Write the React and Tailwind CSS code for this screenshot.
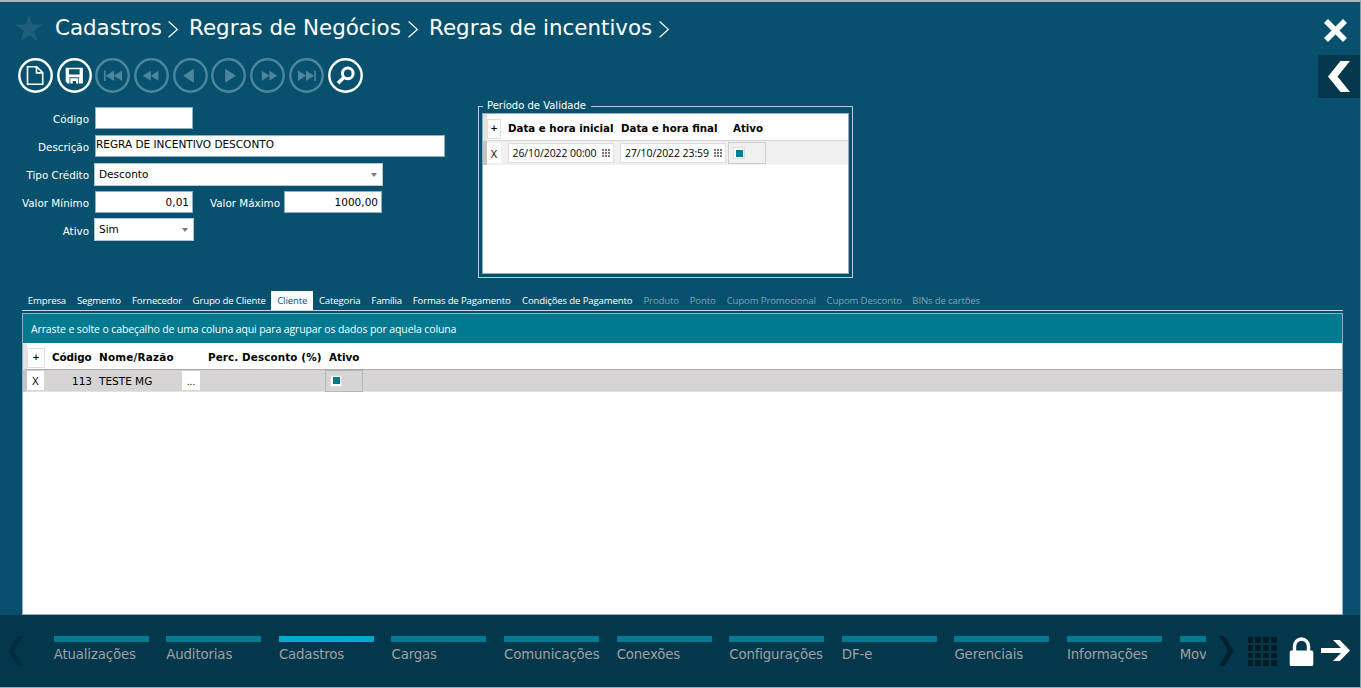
import React from 'react';

const crumbs = [
  { label: 'Cadastros', box: 'w-[113px]' },
  { label: 'Regras de Negócios', box: 'w-[219px]' },
  { label: 'Regras de incentivos', box: 'w-[230px]' },
];

const tabs = [
  { label: 'Empresa', box: 'w-[48.5px]' },
  { label: 'Segmento', box: 'w-[55.5px]' },
  { label: 'Fornecedor', box: 'w-[60.5px]' },
  { label: 'Grupo de Cliente', box: 'w-[84px]' },
  { label: 'Cliente', box: 'w-[42px]', active: true },
  { label: 'Categoria', box: 'w-[53px]' },
  { label: 'Família', box: 'w-[41px]' },
  { label: 'Formas de Pagamento', box: 'w-[109px]' },
  { label: 'Condições de Pagamento', box: 'w-[122px]' },
  { label: 'Produto', box: 'w-[46px]', disabled: true },
  { label: 'Ponto', box: 'w-[37px]', disabled: true },
  { label: 'Cupom Promocional', box: 'w-[100px]', disabled: true },
  { label: 'Cupom Desconto', box: 'w-[86px]', disabled: true },
  { label: 'BINs de cartões', box: 'w-[78px]', disabled: true },
];

const modules = [
  'Atualizações',
  'Auditorias',
  'Cadastros',
  'Cargas',
  'Comunicações',
  'Conexões',
  'Configurações',
  'DF-e',
  'Gerenciais',
  'Informações',
  'Mov',
];

const toolbar = [
  {
    name: 'Novo',
    icon: (
      <path d="M9.5 8.7h9.2l6 6V26.3H9.5zM18.5 8.7v6.2h6.2" fill="none" stroke="currentColor" strokeWidth="1.6" />
    ),
  },
  {
    name: 'Salvar',
    icon: (
      <path
        fillRule="evenodd"
        fill="currentColor"
        d="M8.700 9.700h17.200v15.800h-3.900v-6.200H12.500v6.200h-1.800l-2-2zM12 11.300v5.200h10.600v-5.200zM13.300 20.200h8v5.300h-2.300v-2.400h-3.200v2.400h-2.500z"
      />
    ),
  },
  {
    name: 'Primeiro',
    disabled: true,
    icon: <path fill="currentColor" d="M9 12.5h1.6v10.4H9zM10.6 17.7l8.5-5.2v10.4zM18.6 17.7l8.5-5.2v10.4z" />,
  },
  {
    name: 'Retroceder',
    disabled: true,
    icon: <path fill="currentColor" d="M8.8 17.7l8-5v10zM16.8 17.7l7.6-5v10z" />,
  },
  { name: 'Anterior', disabled: true, icon: <path fill="currentColor" d="M10.2 17.7l10.6-7v14z" /> },
  { name: 'Próximo', disabled: true, icon: <path fill="currentColor" d="M25 17.7l-10.8-7v14z" /> },
  {
    name: 'Avançar',
    disabled: true,
    icon: <path fill="currentColor" d="M19.4 17.7l-7.6-5v10zM27 17.7l-7.6-5v10z" />,
  },
  {
    name: 'Último',
    disabled: true,
    icon: <path fill="currentColor" d="M26.8 12.5h-1.6v10.4h1.6zM25.2 17.7l-8.2-5.2v10.4zM17.2 17.7l-8.2-5.2v10.4z" />,
  },
  {
    name: 'Pesquisar',
    icon: (
      <g fill="none" stroke="currentColor">
        <circle cx="19.8" cy="15.4" r="5.3" strokeWidth="3" />
        <path d="M15.5 19.8L10 25.2" strokeWidth="3.6" />
      </g>
    ),
  },
];

const CrumbArrow = () => (
  <svg className="mt-[18px] h-[19px] w-[11px] shrink-0" viewBox="0 0 11 19" fill="none" stroke="#fff" strokeWidth="1.2">
    <path d="M0.600 1.500L9.300 9.400L0.600 17.300" />
  </svg>
);

const ToolbarButton = ({ name, icon, disabled }) => (
  <button aria-label={name} className={disabled ? 'text-[#4d859b]' : 'text-white'}>
    <svg className="block h-[35px] w-[35px]" viewBox="0 0 35 35">
      <circle cx="17.5" cy="17.5" r="16.2" fill="none" stroke="currentColor" strokeWidth="2.4" />
      {icon}
    </svg>
  </button>
);

const Label = ({ children, className }) => (
  <label className={`shrink-0 text-right text-[10.35px] leading-4 whitespace-nowrap text-white ${className}`}>
    {children}
  </label>
);

const Field = ({ value, className }) => (
  <div className={`flex h-[22px] items-center border border-[#8fb0be] bg-white text-black ${className}`}>{value}</div>
);

const Select = ({ value, className }) => (
  <div
    className={`flex h-[23px] items-center justify-between border border-[#b4c8d1] bg-white pt-px pr-[5px] pl-[4px] text-black ${className}`}
  >
    {value}
    <svg className="h-[4px] w-[6px]" viewBox="0 0 6 4">
      <path d="M0 0h6L3 4z" fill="#777" />
    </svg>
  </div>
);

const Check = () => (
  <span className="flex h-[12px] w-[12px] items-center justify-center border border-[#dcdcdc] bg-white">
    <span className="h-[7px] w-[7px] bg-[#007a91]" />
  </span>
);

const DateCell = ({ value }) => (
  <div className="flex h-[20px] w-[106px] items-center justify-between border border-[#dedede] bg-white pt-[2px] pr-[3px] pl-[4px] font-['Open_Sans',sans-serif] text-[10.5px] tracking-[-0.08px] whitespace-nowrap">
    {value}
    <svg className="-mt-[3px] h-[8px] w-[8px] shrink-0" viewBox="0 0 8 8" fill="#777">
      <path d="M0 0h2v2H0zM3 0h2v2H3zM6 0h2v2H6zM0 3h2v2H0zM3 3h2v2H3zM6 3h2v2H6zM0 6h2v2H0zM3 6h2v2H3zM6 6h2v2H6z" />
    </svg>
  </div>
);

const Header = () => (
  <header className="flex h-[56px] justify-between">
    <div className="flex pl-[15px] text-[21.4px] leading-[51px] whitespace-nowrap text-white">
      <svg className="mt-[12px] h-[28px] w-[28px] shrink-0" viewBox="0 0 28 28">
        <path d="M14 0l3.3 10.4H28l-8.7 6.5L22.6 27.5 14 21 5.4 27.5 8.7 16.9 0 10.4h10.7z" fill="#1e5f7c" />
      </svg>
      <nav className="ml-[12px] flex">
        {crumbs.map((crumb) => (
          <div key={crumb.label} className="mr-[10px] flex">
            <span className={crumb.box}>{crumb.label}</span>
            <CrumbArrow />
          </div>
        ))}
      </nav>
    </div>
    <svg className="mt-[17px] mr-[12px] h-[24px] w-[24px]" viewBox="0 0 24 24" stroke="#fff" strokeWidth="5.6">
      <path d="M2 2L21 21M21 2L2 21" />
    </svg>
  </header>
);

const Form = () => (
  <div className="flex w-[478px] flex-col pt-[8px] text-[10.5px]">
    <div className="flex h-[28px] items-start">
      <Label className="w-[89px] pt-[4px]">Código</Label>
      <Field className="ml-[6px] w-[98px]" />
    </div>
    <div className="flex h-[28px] items-start">
      <Label className="w-[89px] pt-[4px]">Descrição</Label>
      <Field className="ml-[6px] w-[350px] pb-[3px]" value="REGRA DE INCENTIVO DESCONTO" />
    </div>
    <div className="flex h-[28px] items-start">
      <Label className="w-[89px] pt-[4px]">Tipo Crédito</Label>
      <Select className="ml-[5px] w-[289px]" value="Desconto" />
    </div>
    <div className="flex h-[27px] items-start">
      <Label className="w-[89px] pt-[4px]">Valor Mínimo</Label>
      <Field className="ml-[6px] w-[98px] justify-end pt-px pr-[3px]" value="0,01" />
      <Label className="w-[87px] pt-[4px]">Valor Máximo</Label>
      <Field className="ml-[4px] w-[98px] justify-end pt-px pr-[3px]" value="1000,00" />
    </div>
    <div className="flex items-start">
      <Label className="w-[89px] pt-[5px]">Ativo</Label>
      <Select className="ml-[5px] w-[100px]" value="Sim" />
    </div>
  </div>
);

const ValidityPeriod = () => (
  <fieldset className="h-[179px] w-[375px] border border-[#b9ccd5] px-[3px] text-[10.67px]">
    <legend className="ml-[1px] h-[14px] w-[108px] px-[4px] text-[10px] leading-[13px] whitespace-nowrap text-white">
      Período de Validade
    </legend>
    <div className="h-[161px] border border-[#8fb0be] bg-white text-black">
      <div className="flex h-[27px] items-center border-b border-l-4 border-b-[#d5d5d5] border-l-[#e2e2e2] pt-[3px] text-[10.25px] font-bold whitespace-nowrap">
        <span className="flex h-[20px] w-[14px] items-center justify-center border border-[#dedede] text-[9px]">+</span>
        <span className="ml-[7px] w-[113px]">Data e hora inicial</span>
        <span className="w-[112px]">Data e hora final</span>
        <span>Ativo</span>
      </div>
      <div className="flex h-[24px] items-center border-l-4 border-[#c4c4c4] bg-[#f0f0f0]">
        <span className="flex h-[20px] w-[14px] items-center justify-center bg-white pt-[2px] font-['Open_Sans',sans-serif] text-[11px]">
          X
        </span>
        <span className="w-[6.5px]" />
        <DateCell value="26/10/2022 00:00" />
        <span className="w-[6.5px]" />
        <DateCell value="27/10/2022 23:59" />
        <span className="ml-[2px] flex h-[22px] w-[38px] items-center border border-[#cdcdcd] pl-[4px]">
          <Check />
        </span>
      </div>
    </div>
  </fieldset>
);

const Tabs = () => (
  <div className="mr-[17px] ml-[22px] flex h-[20px] border-b border-[#c8d8df] pl-[0.7px] font-['Open_Sans',sans-serif] text-[9.6px] leading-[19px] tracking-[-0.15px]">
    {tabs.map((tab) => (
      <div
        key={tab.label}
        className={`${tab.box} flex shrink-0 justify-center whitespace-nowrap ${
          tab.active ? 'bg-white text-[#07516f]' : tab.disabled ? 'text-[#7ba5b7]' : 'text-white'
        }`}
      >
        {tab.label}
      </div>
    ))}
  </div>
);

const ClientGrid = () => (
  <div className="mt-[2px] mr-[17px] ml-[22px] h-[302px] border border-[#8fb0be] bg-white text-[10.5px] text-black">
    <div className="h-[29px] bg-[#007a91] pl-[8px] font-['Open_Sans',sans-serif] text-[10.5px] leading-[30px] tracking-[-0.12px] whitespace-nowrap text-white">
      Arraste e solte o cabeçalho de uma coluna aqui para agrupar os dados por aquela coluna
    </div>
    <div className="flex h-[27px] items-center border-b border-l-4 border-b-[#a9a9a9] border-l-[#e2e2e2] pt-[3px] text-[10.4px] font-bold whitespace-nowrap">
      <span className="flex h-[20px] w-[18px] items-center justify-center border border-[#dedede] text-[9px]">+</span>
      <span className="ml-[7px] w-[47px] tracking-[-0.15px]">Código</span>
      <span className="w-[109px] tracking-[0.2px]">Nome/Razão</span>
      <span className="w-[121px] tracking-[0.1px]">Perc. Desconto (%)</span>
      <span>Ativo</span>
    </div>
    <div className="flex h-[22px] items-center border-b border-l-4 border-b-[#e2e2e2] border-l-[#c4c4c4] bg-[#d6d4d5] whitespace-nowrap">
      <span className="flex h-[19px] w-[17px] items-center justify-center bg-white pt-[2px] font-['Open_Sans',sans-serif] text-[11px]">
        X
      </span>
      <span className="w-[48px] pt-[2px] text-right">113</span>
      <span className="ml-[7px] w-[83px] pt-[2px]">TESTE MG</span>
      <span className="flex h-[19px] w-[18px] items-center justify-center bg-white pt-[4px] text-[9px]">...</span>
      <span className="ml-[125px] flex h-[22px] w-[38px] items-center border border-[#b5b5b5] pl-[4px]">
        <Check />
      </span>
    </div>
  </div>
);

const Footer = () => (
  <footer className="flex h-[73px] w-full bg-[#03374b]">
    <svg className="mt-[21px] ml-[8px] h-[30px] w-[15px] shrink-0" viewBox="0 0 15 30">
      <path d="M9.5 0H15L6 15l9 15H9.5L0 15z" fill="#032d3e" />
    </svg>
    <div className="ml-[30.7px] flex w-[1152px] shrink-0 gap-[17.6px] overflow-hidden pt-[21px]">
      {modules.map((item) => (
        <div
          key={item}
          className="w-[95px] shrink-0 text-[13.33px] leading-[17px] tracking-[-0.15px] whitespace-nowrap text-[#a0a2a3]"
        >
          <div className={`mb-[4px] h-[6px] ${item === 'Cadastros' ? 'bg-[#00aacf]' : 'bg-[#007a91]'}`} />
          {item}
        </div>
      ))}
    </div>
    <svg className="mt-[21px] ml-[13px] h-[30px] w-[15px] shrink-0" viewBox="0 0 15 30">
      <path d="M5.5 0H0l9 15-9 15h5.5L15 15z" fill="#02222f" />
    </svg>
    <div className="mt-[22px] ml-[14px] grid h-[29px] w-[29px] shrink-0 grid-cols-4 grid-rows-4 gap-[2px]">
      {Array.from({ length: 16 }, (_, i) => (
        <span key={i} className="bg-[#021c27]" />
      ))}
    </div>
    <svg className="mt-[22px] ml-[12px] h-[29px] w-[25px] shrink-0" viewBox="0 0 25 29">
      <path d="M5.5 15V9.5a7 7.5 0 0 1 14 0V15" fill="none" stroke="#fff" strokeWidth="3.4" />
      <rect x="0.7" y="13.5" width="23.6" height="15.5" rx="1.5" fill="#fff" />
    </svg>
    <svg className="mt-[25px] ml-[7px] h-[21px] w-[29px] shrink-0" viewBox="0 0 29 21">
      <path d="M0 7.9h20L12 0h6.800L29 10.5 18.8 21H12l8-7.9H0z" fill="#fff" />
    </svg>
  </footer>
);

const App = () => {
  return (
    <div className="h-[688px] w-[1361px] overflow-hidden border-t-2 border-r border-b border-t-[#aeb4b9] border-r-[#7d9fae] border-b-[#9fb0b8] bg-[#07516f] font-['DejaVu_Sans',sans-serif]">
      <Header />
      <div className="flex h-[41px] justify-between">
        <div className="flex h-[35px] gap-[3.7px] pl-[18px]">
          {toolbar.map((button) => (
            <ToolbarButton key={button.name} {...button} />
          ))}
        </div>
        <button aria-label="Recolher" className="-mt-[3px] h-[43px] w-[42px] bg-[#03374b]">
          <svg className="ml-[10px] h-[31px] w-[22px]" viewBox="0 0 22 31">
            <path d="M12.5 0H22L9.5 15.5 22 31h-9.5L0 15.5z" fill="#fff" />
          </svg>
        </button>
      </div>
      <div className="flex h-[192px]">
        <Form />
        <ValidityPeriod />
      </div>
      <Tabs />
      <ClientGrid />
      <Footer />
    </div>
  );
};

export default App;
